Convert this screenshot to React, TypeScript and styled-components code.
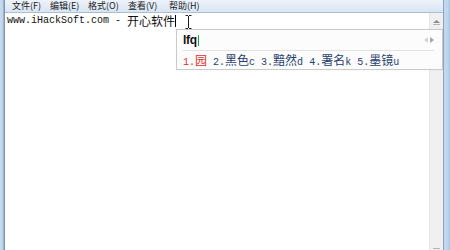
import React from "react";
import styled, { createGlobalStyle } from "styled-components";

const Global = createGlobalStyle`
  html, body { margin: 0; padding: 0; width: 450px; height: 250px; overflow: hidden; background: #fff; }
  #root { width: 450px; height: 250px; }
`;

const Window = styled.div`
  display: flex;
  width: 450px;
  height: 250px;
  position: relative;
  overflow: hidden;
`;

const LeftFrame = styled.div`
  width: 5px;
  flex: none;
  background: linear-gradient(to right, #c9ddf1 0px, #bcd3ec 3px, #8196ae 4px, #8196ae 5px);
`;

const RightFrame = styled.div`
  width: 7px;
  flex: none;
  background: linear-gradient(to right, #8ea4bd 0px, #8ea4bd 1px, #c3d9f0 1px, #bcd4ee 5px, #a9c2dd 7px);
`;

const Main = styled.div`
  flex: 1;
  display: flex;
  flex-direction: column;
  min-width: 0;
`;

const MenuBar = styled.div`
  height: 12px;
  flex: none;
  display: flex;
  align-items: center;
  gap: 10px;
  padding-left: 7px;
  background: linear-gradient(to bottom, #eef3fa, #d9e5f3);
  border-bottom: 1px solid #a9bfd6;
  font-family: "Noto Sans CJK SC", "Noto Sans", sans-serif;
  font-size: 9px;
  color: #1b1b1b;
  line-height: 12px;
`;

const MenuItem = styled.span<{ $w: number }>`
  width: ${(p) => p.$w}px;
  white-space: nowrap;
`;

const Client = styled.div`
  flex: 1;
  display: flex;
  min-height: 0;
`;

const EditArea = styled.div`
  flex: 1;
  position: relative;
  background: #fff;
  padding: 1px 0 0 2px;
`;

const Line = styled.div`
  font-family: "Noto Sans CJK SC", sans-serif;
  font-size: 12px;
  line-height: 13px;
  color: #111;
  white-space: pre;
  display: flex;
  align-items: center;
`;

const Latin = styled.span`
  font-family: "Liberation Mono", monospace;
  font-size: 10px;
`;

const Caret = styled.span<{ $color: string; $h: number }>`
  display: inline-block;
  width: 1px;
  height: ${(p) => p.$h}px;
  background: ${(p) => p.$color};
`;

const IBeam = styled.svg`
  position: absolute;
  left: 180px;
  top: 2px;
`;

const Scrollbar = styled.div`
  width: 14px;
  flex: none;
  background: #f0f0f0;
  border-left: 1px solid #e3e3e3;
  display: flex;
  flex-direction: column;
  justify-content: space-between;
  align-items: center;
  padding: 7px 0 0 0;
  margin-bottom: -3px;
  box-sizing: border-box;
`;

const ArrowBtn = styled.svg`
  display: block;
`;

const Ime = styled.div`
  position: absolute;
  left: 171px;
  top: 16px;
  width: 251px;
  height: 39px;
  background: #fcfcfc;
  border: 1px solid #cacaca;
  box-shadow: 0 0 1px rgba(0, 0, 0, 0.08);
  display: flex;
  flex-direction: column;
  padding: 0 8px 0 6px;
`;

const ImeTop = styled.div`
  height: 20px;
  display: flex;
  align-items: center;
  justify-content: space-between;
  border-bottom: 1px solid #e2e2e2;
`;

const Pinyin = styled.div`
  display: flex;
  align-items: center;
  font-family: "Liberation Sans", Arial, sans-serif;
  font-weight: bold;
  font-size: 12px;
  letter-spacing: -0.3px;
  color: #111;
  gap: 1px;
`;

const Pager = styled.div`
  display: flex;
  gap: 2px;
  align-items: center;
`;

const Candidates = styled.div`
  flex: 1;
  display: flex;
  align-items: center;
  font-family: "Noto Sans CJK SC", sans-serif;
  font-size: 12px;
  color: #27406e;
  white-space: pre;
  padding-bottom: 1px;
`;

const Cand = styled.span<{ $active?: boolean }>`
  color: ${(p) => (p.$active ? "#e0302a" : "#27406e")};
  margin-right: 6px;
`;

const candidates: [string, string, string][] = [
  ["1.", "园", ""],
  ["2.", "黑色", "c"],
  ["3.", "黯然", "d"],
  ["4.", "署名", "k"],
  ["5.", "墨镜", "u"],
];

export default function App() {
  return (
    <>
      <Global />
      <Window>
        <LeftFrame />
        <Main>
          <MenuBar>
            <MenuItem $w={28}>文件(F)</MenuItem>
            <MenuItem $w={28}>编辑(E)</MenuItem>
            <MenuItem $w={30}>格式(O)</MenuItem>
            <MenuItem $w={31}>查看(V)</MenuItem>
            <MenuItem $w={30}>帮助(H)</MenuItem>
          </MenuBar>
          <Client>
            <EditArea>
              <Line>
                <Latin>www.iHackSoft.com - </Latin>开心软件
                <Caret $color="#000" $h={12} />
              </Line>
              <IBeam width="7" height="14" viewBox="0 0 7 14">
                <path d="M0.5 0.5h2.5M4 0.5h2.5M3.5 1v12M0.5 13.5h2.5M4 13.5h2.5" stroke="#222" strokeWidth="1" fill="none" />
              </IBeam>
              <Ime>
                <ImeTop>
                  <Pinyin>
                    lfq
                    <Caret $color="#2f9a3c" $h={11} />
                  </Pinyin>
                  <Pager>
                    <svg width="4" height="6" viewBox="0 0 4 6">
                      <path d="M4 0 L0 3 L4 6 Z" fill="#d2d2d2" />
                    </svg>
                    <svg width="4" height="6" viewBox="0 0 4 6">
                      <path d="M0 0 L4 3 L0 6 Z" fill="#a6a6a6" />
                    </svg>
                  </Pager>
                </ImeTop>
                <Candidates>
                  {candidates.map(([n, w, k], i) => (
                    <Cand key={n} $active={i === 0}>
                      <Latin>{n}</Latin>
                      {w}
                      {k && <Latin>{k}</Latin>}
                    </Cand>
                  ))}
                </Candidates>
              </Ime>
            </EditArea>
            <Scrollbar>
              <ArrowBtn width="7" height="5" viewBox="0 0 7 5">
                <path d="M3.5 0 L7 3 L0 3 Z" fill="#8a8a8a" />
                <rect x="0" y="4" width="7" height="1" fill="#b5b5b5" />
              </ArrowBtn>
              <ArrowBtn width="7" height="5" viewBox="0 0 7 5">
                <rect x="0" y="0" width="7" height="1" fill="#b5b5b5" />
                <path d="M0 2 L7 2 L3.5 5 Z" fill="#8a8a8a" />
              </ArrowBtn>
            </Scrollbar>
          </Client>
        </Main>
        <RightFrame />
      </Window>
    </>
  );
}
